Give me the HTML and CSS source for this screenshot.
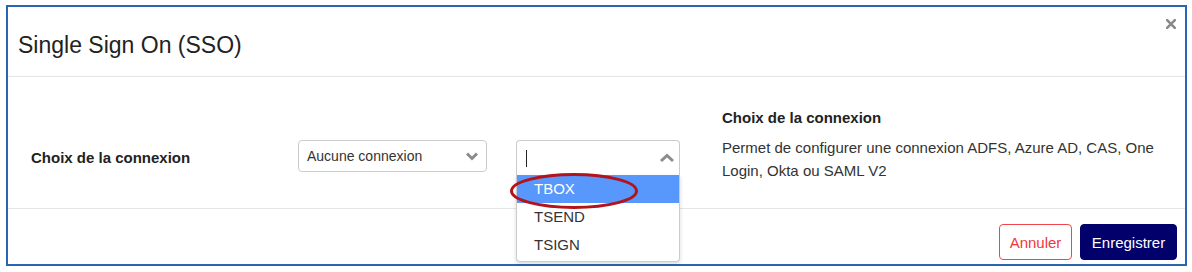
FILE: index.html
```html
<!DOCTYPE html>
<html lang="fr">
<head>
    <meta charset="UTF-8">
    <title>Single Sign On (SSO)</title>
    <link rel="stylesheet" href="styles.css">
</head>
<body>
    <!-- Modal -->
    <div class="modal">
        <div class="modal-header">
            <h4 class="modal-title">Single Sign On (SSO)</h4>
            <button type="button" class="close" aria-label="Fermer">
                <svg width="10" height="10" viewBox="0 0 10 10">
                    <path d="M1.2 1.2 L8.8 8.8 M8.8 1.2 L1.2 8.8" stroke="#8a8a8a" stroke-width="2.6" stroke-linecap="square"/>
                </svg>
            </button>
        </div>

        <div class="modal-body">
            <div class="form-row">
                <label class="form-label">Choix de la connexion</label>

                <div class="select-box">
                    <span class="select-text">Aucune connexion</span>
                    <svg class="chevron" width="14" height="10" viewBox="0 0 14 10">
                        <path d="M2 2.5 L7 7.5 L12 2.5" fill="none" stroke="#8c8c8c" stroke-width="3"/>
                    </svg>
                </div>

                <div class="combo">
                    <div class="combo-box">
                        <span class="caret-line"></span>
                        <svg class="chevron" width="16" height="10" viewBox="0 0 16 10">
                            <path d="M2 8 L8 2.5 L14 8" fill="none" stroke="#8c8c8c" stroke-width="3"/>
                        </svg>
                    </div>
                    <ul class="combo-list">
                        <li class="active">TBOX</li>
                        <li>TSEND</li>
                        <li>TSIGN</li>
                    </ul>
                    <svg class="highlight-ring" width="132" height="40" viewBox="0 0 132 40">
                        <ellipse cx="65" cy="20" rx="62.5" ry="16.5" fill="none" stroke="#b3141b" stroke-width="3"/>
                    </svg>
                </div>
            </div>

            <div class="help">
                <div class="help-title">Choix de la connexion</div>
                <p class="help-text">Permet de configurer une connexion ADFS, Azure AD, CAS, One Login, Okta ou SAML V2</p>
            </div>
        </div>

        <div class="modal-footer">
            <button type="button" class="btn cancel-btn">Annuler</button>
            <button type="button" class="btn save-btn">Enregistrer</button>
        </div>
    </div>
</body>
</html>
```

FILE: styles.css
```css
* {
    margin: 0;
    padding: 0;
    box-sizing: border-box;
    font-family: "Liberation Sans", Arial, sans-serif;
}

body {
    background-color: #ffffff;
    color: #333333;
    padding: 5px 5px 0 6px;
}

.modal {
    border: 2px solid #2a66b0;
    height: 261px;
    display: flex;
    flex-direction: column;
}

.modal-header {
    height: 70px;
    border-bottom: 1px solid #e5e5e5;
    display: flex;
    justify-content: space-between;
    align-items: flex-start;
    padding: 0 9px 0 10px;
}

.modal-title {
    font-size: 23px;
    font-weight: normal;
    line-height: 26px;
    color: #222222;
    margin-top: 25px;
}

.close {
    border: none;
    background: none;
    margin-top: 12px;
    display: flex;
    cursor: pointer;
}

.modal-body {
    height: 132px;
    border-bottom: 1px solid #e5e5e5;
    display: flex;
    padding: 31px 20px 0 23px;
}

.form-row {
    display: flex;
    align-items: flex-start;
    margin-top: 32px;
}

.form-label {
    width: 267px;
    font-size: 15px;
    font-weight: bold;
    color: #222222;
    line-height: 20px;
    margin-top: 8px;
}

.select-box {
    width: 189px;
    height: 32px;
    border: 1px solid #cccccc;
    border-radius: 4px;
    display: flex;
    align-items: center;
    justify-content: space-between;
    padding: 0 7px 0 8px;
    font-size: 14px;
    color: #333333;
}

.combo {
    position: relative;
    width: 164px;
    margin-left: 29px;
}

.combo-box {
    height: 35px;
    border: 1px solid #cccccc;
    border-bottom: none;
    border-radius: 4px 4px 0 0;
    display: flex;
    align-items: center;
    justify-content: space-between;
    padding: 0 4px 0 9px;
}

.caret-line {
    width: 1px;
    height: 17px;
    background-color: #222222;
    margin-top: 1px;
}

.combo-list {
    position: absolute;
    top: 35px;
    left: 0;
    width: 164px;
    list-style: none;
    background-color: #ffffff;
    border: 1px solid #cccccc;
    border-top: none;
    border-radius: 0 0 4px 4px;
    padding-bottom: 2px;
    box-shadow: 0 2px 4px rgba(0, 0, 0, 0.15);
    z-index: 2;
}

.combo-list li {
    height: 28px;
    line-height: 28px;
    padding-left: 17px;
    font-size: 15px;
    color: #333333;
}

.combo-list li.active {
    background-color: #5897fb;
    color: #ffffff;
}

.highlight-ring {
    position: absolute;
    top: 31px;
    left: -7px;
    z-index: 3;
}

.help {
    width: 452px;
    margin-left: 42px;
}

.help-title {
    font-size: 15px;
    font-weight: bold;
    color: #222222;
    line-height: 20px;
    margin-bottom: 8px;
}

.help-text {
    font-size: 15px;
    line-height: 23px;
    color: #333333;
}

.modal-footer {
    display: flex;
    justify-content: flex-end;
    gap: 8px;
    padding: 15px 8px 0 0;
}

.btn {
    height: 36px;
    border-radius: 4px;
    font-size: 15px;
    cursor: pointer;
}

.cancel-btn {
    width: 73px;
    background-color: #ffffff;
    border: 1px solid #f0474c;
    color: #f0383e;
}

.save-btn {
    width: 97px;
    background-color: #02006b;
    border: 1px solid #02006b;
    color: #ffffff;
}
```
